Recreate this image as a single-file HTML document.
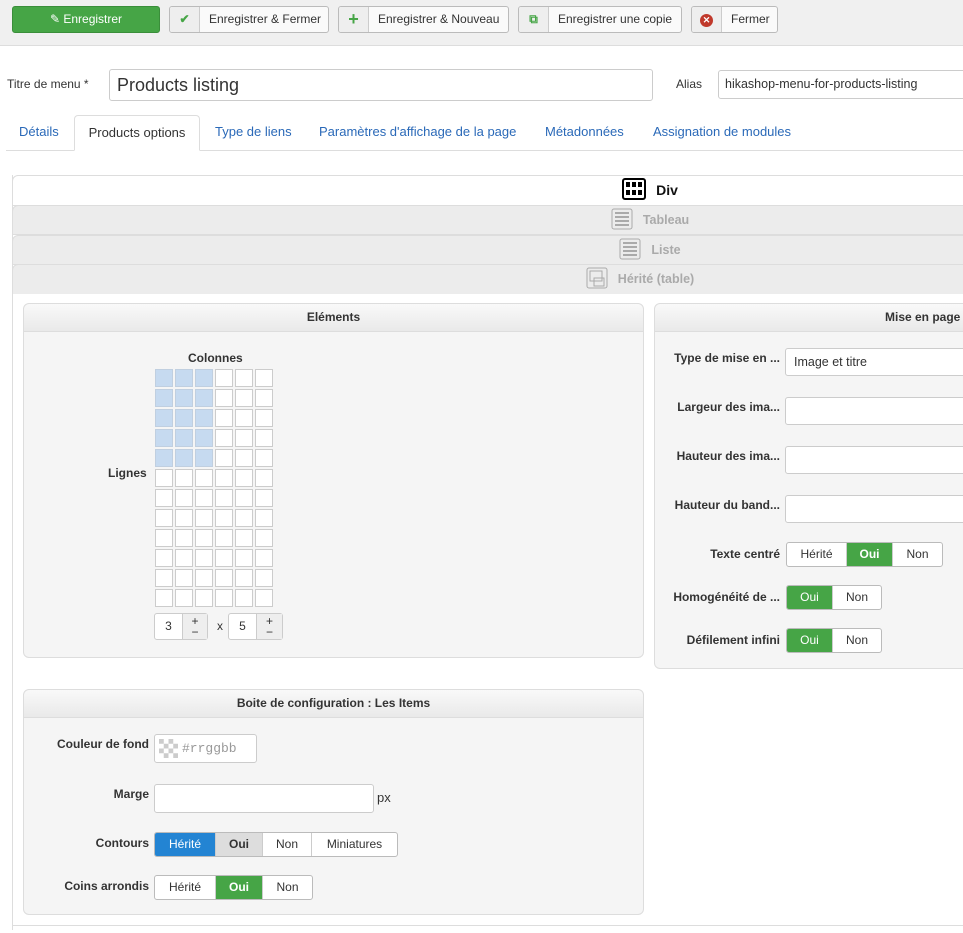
<!DOCTYPE html>
<html><head><meta charset="utf-8">
<style>
*{box-sizing:border-box}
body{margin:0;width:963px;height:933px;overflow:hidden;background:#fff;font-family:"Liberation Sans",Arial,sans-serif;font-size:13px;color:#333;position:relative}
.a{position:absolute;white-space:nowrap}
.tb{left:0;top:0;width:963px;height:46px;background:#f0f0f0;border-bottom:1px solid #ddd}
.btn{position:absolute;top:6px;height:27px;border:1px solid #bbb;border-radius:3px;background:#fafafa;font-size:12px;line-height:25px;color:#333;display:flex;white-space:nowrap;overflow:hidden}
.btn .ic{width:30px;flex:none;border-right:1px solid #ccc;background:#eee;text-align:center;font-weight:bold}
.btn .t{padding:0 9px}
.inp{position:absolute;border:1px solid #ccc;border-radius:3px;background:#fff;white-space:nowrap;overflow:hidden}
.tab{position:absolute;top:115px;height:36px;line-height:34px;color:#2a69b8;font-size:13px;white-space:nowrap}
.acc{position:absolute;left:12px;width:1276px;border:1px solid #ddd;border-radius:6px 0 0 0;text-align:center;font-weight:bold}
.panel{position:absolute;background:#f5f5f5;border:1px solid #ddd;border-radius:6px}
.ph{height:28px;line-height:27px;text-align:center;font-weight:bold;font-size:12px;background:linear-gradient(#f9f9f9,#e9e9e9);border-bottom:1px solid #ddd;border-radius:6px 6px 0 0;color:#333;white-space:nowrap}
.lbl{position:absolute;font-weight:bold;font-size:12px;text-align:right;color:#333;white-space:nowrap}
.grp{position:absolute;display:flex;height:25px;border:1px solid #bbb;border-radius:3px;overflow:hidden;background:#fff;font-size:12px;line-height:23px}
.grp span{text-align:center;border-right:1px solid #ccc}
.grp span:last-child{border-right:none}
.g{background:#46a546;color:#fff}
.cell{position:absolute;width:18px;height:18px;border:1px solid #ccc;background:#fff}
.cell.s{background:#c6daf0;border-color:#c0cfe0}
</style></head><body>
<div class="a tb"></div>
<div class="btn" style="left:12px;width:148px;background:#46a546;border-color:#3a8e3a;color:#fff;justify-content:center">&#9998;&nbsp;Enregistrer</div>
<div class="btn" style="left:169px;width:160px"><span class="ic" style="color:#46a546">&#10004;</span><span class="t">Enregistrer &amp; Fermer</span></div>
<div class="btn" style="left:338px;width:171px"><span class="ic" style="color:#46a546;font-size:18px">+</span><span class="t">Enregistrer &amp; Nouveau</span></div>
<div class="btn" style="left:518px;width:164px"><span class="ic" style="color:#46a546">&#10697;</span><span class="t">Enregistrer une copie</span></div>
<div class="btn" style="left:691px;width:87px"><span class="ic"><span style="display:inline-block;width:13px;height:13px;border-radius:50%;background:#c0392b;color:#fff;font-size:9px;line-height:13px;margin-top:6px">&#10005;</span></span><span class="t">Fermer</span></div>

<div class="a" style="left:7px;top:77px;font-size:12px">Titre de menu *</div>
<div class="inp" style="left:109px;top:69px;width:544px;height:32px;font-size:18px;line-height:30px;padding-left:7px">Products listing</div>
<div class="a" style="left:676px;top:77px;font-size:12px">Alias</div>
<div class="inp" style="left:718px;top:70px;width:250px;height:29px;line-height:27px;padding-left:6px;font-size:12.5px">hikashop-menu-for-products-listing</div>

<div class="a" style="left:6px;top:150px;width:957px;border-top:1px solid #ddd"></div>
<div class="tab" style="left:19px">Détails</div>
<div class="tab" style="left:74px;width:126px;border:1px solid #ddd;border-bottom-color:#fff;background:#fff;border-radius:4px 4px 0 0;color:#333;text-align:center">Products options</div>
<div class="tab" style="left:215px">Type de liens</div>
<div class="tab" style="left:319px">Paramètres d'affichage de la page</div>
<div class="tab" style="left:545px">Métadonnées</div>
<div class="tab" style="left:653px">Assignation de modules</div>

<div class="a" style="left:12px;top:175px;width:1px;height:755px;background:#ddd"></div>
<div class="a" style="left:12px;top:925px;width:951px;height:1px;background:#ddd"></div>
<div class="acc" style="top:175px;height:31px;background:#fff;font-size:14px;line-height:28px;color:#111"><svg width="24" height="22" style="vertical-align:-5px;margin-right:10px" viewBox="0 0 24 22"><rect x="1" y="1" width="22" height="20" rx="2" fill="#fff" stroke="#000" stroke-width="2"/><g fill="#000"><rect x="4" y="4" width="4" height="5"/><rect x="10" y="4" width="4" height="5"/><rect x="16" y="4" width="4" height="5"/><rect x="4" y="12" width="4" height="5"/><rect x="10" y="12" width="4" height="5"/><rect x="16" y="12" width="4" height="5"/></g></svg>Div</div>
<div class="acc" style="top:205px;height:30px;background:#ececec;color:#aaa;line-height:28px;font-size:12.5px"><svg width="22" height="22" style="vertical-align:-6px;margin-right:10px" viewBox="0 0 22 22"><rect x="1" y="1" width="20" height="20" rx="2" fill="none" stroke="#aaa"/><g stroke="#aaa" stroke-width="2"><path d="M4 5h14M4 9h14M4 13h14M4 17h14"/></g></svg>Tableau</div>
<div class="acc" style="top:235px;height:30px;background:#ececec;color:#aaa;line-height:28px;font-size:12.5px"><svg width="22" height="22" style="vertical-align:-6px;margin-right:10px" viewBox="0 0 22 22"><rect x="1" y="1" width="20" height="20" rx="2" fill="none" stroke="#aaa"/><g stroke="#aaa" stroke-width="2"><path d="M4 5h14M4 9h14M4 13h14M4 17h14"/></g></svg>Liste</div>
<div class="acc" style="top:264px;height:30px;background:#ececec;color:#aaa;line-height:28px;font-size:12.5px;border-bottom:none;padding-right:20px"><svg width="22" height="22" style="vertical-align:-6px;margin-right:10px" viewBox="0 0 22 22"><rect x="1" y="1" width="20" height="20" rx="2" fill="none" stroke="#aaa"/><rect x="4" y="4" width="12" height="10" fill="none" stroke="#aaa"/><rect x="8" y="11" width="10" height="8" fill="none" stroke="#aaa"/></svg>Hérité (table)</div>

<div class="panel" style="left:23px;top:303px;width:621px;height:355px"><div class="ph">Eléments</div></div>
<div class="lbl" style="left:188px;top:351px">Colonnes</div>
<div class="lbl" style="left:108px;top:466px">Lignes</div>
<div id="grid"></div>
<div class="a" style="left:154px;top:613px;width:54px;height:27px;border:1px solid #ccc;border-radius:3px;background:#fff;display:flex;font-size:12px"><span style="width:27px;text-align:center;line-height:25px">3</span><span style="flex:1;background:#eee;border-left:1px solid #ccc;text-align:center;line-height:11px;padding-top:2px">+<br>−</span></div>
<div class="a" style="left:217px;top:619px;font-size:12px">x</div>
<div class="a" style="left:228px;top:613px;width:55px;height:27px;border:1px solid #ccc;border-radius:3px;background:#fff;display:flex;font-size:12px"><span style="width:27px;text-align:center;line-height:25px">5</span><span style="flex:1;background:#eee;border-left:1px solid #ccc;text-align:center;line-height:11px;padding-top:2px">+<br>−</span></div>

<div class="panel" style="left:654px;top:303px;width:330px;height:366px"><div class="ph" style="text-align:left;padding-left:230px">Mise en page</div></div>
<div class="lbl" style="left:658px;top:351px;width:122px">Type de mise en ...</div>
<div class="inp" style="left:785px;top:348px;width:200px;height:28px;line-height:26px;padding-left:8px;font-size:12.5px">Image et titre</div>
<div class="lbl" style="left:658px;top:400px;width:122px">Largeur des ima...</div>
<div class="inp" style="left:785px;top:397px;width:200px;height:28px"></div>
<div class="lbl" style="left:658px;top:449px;width:122px">Hauteur des ima...</div>
<div class="inp" style="left:785px;top:446px;width:200px;height:28px"></div>
<div class="lbl" style="left:658px;top:498px;width:122px">Hauteur du band...</div>
<div class="inp" style="left:785px;top:495px;width:200px;height:28px"></div>
<div class="lbl" style="left:658px;top:547px;width:122px">Texte centré</div>
<div class="grp" style="left:786px;top:542px"><span style="width:60px">Hérité</span><span class="g" style="width:46px;font-weight:bold">Oui</span><span style="width:49px">Non</span></div>
<div class="lbl" style="left:658px;top:590px;width:122px">Homogénéité de ...</div>
<div class="grp" style="left:786px;top:585px"><span class="g" style="width:46px">Oui</span><span style="width:48px">Non</span></div>
<div class="lbl" style="left:658px;top:633px;width:122px">Défilement infini</div>
<div class="grp" style="left:786px;top:628px"><span class="g" style="width:46px">Oui</span><span style="width:48px">Non</span></div>

<div class="panel" style="left:23px;top:689px;width:621px;height:226px"><div class="ph">Boite de configuration : Les Items</div></div>
<div class="lbl" style="left:30px;top:737px;width:119px">Couleur de fond</div>
<div class="inp" style="left:154px;top:734px;width:103px;height:29px;display:flex;align-items:center;padding-left:4px"><svg width="19" height="19" viewBox="0 0 4 4"><rect width="4" height="4" fill="#fff"/><g fill="#ccc"><rect x="0" y="0" width="1" height="1"/><rect x="2" y="0" width="1" height="1"/><rect x="1" y="1" width="1" height="1"/><rect x="3" y="1" width="1" height="1"/><rect x="0" y="2" width="1" height="1"/><rect x="2" y="2" width="1" height="1"/><rect x="1" y="3" width="1" height="1"/><rect x="3" y="3" width="1" height="1"/></g></svg><span style="font-family:'Liberation Mono',monospace;color:#999;margin-left:4px;font-size:13px">#rrggbb</span></div>
<div class="lbl" style="left:30px;top:787px;width:119px">Marge</div>
<div class="inp" style="left:154px;top:784px;width:220px;height:29px"></div>
<div class="a" style="left:377px;top:790px">px</div>
<div class="lbl" style="left:30px;top:836px;width:119px">Contours</div>
<div class="grp" style="left:154px;top:832px"><span style="width:61px;background:#2384d3;color:#fff">Hérité</span><span style="width:47px;background:#ddd;font-weight:bold">Oui</span><span style="width:49px">Non</span><span style="width:85px">Miniatures</span></div>
<div class="lbl" style="left:30px;top:879px;width:119px">Coins arrondis</div>
<div class="grp" style="left:154px;top:875px"><span style="width:61px">Hérité</span><span class="g" style="width:47px;font-weight:bold">Oui</span><span style="width:49px">Non</span></div>

<script>
var h='';for(var r=0;r<12;r++)for(var c=0;c<6;c++){h+='<div class="cell'+(r<5&&c<3?' s':'')+'" style="left:'+(155+c*20)+'px;top:'+(369+r*20)+'px"></div>';}
document.getElementById('grid').innerHTML=h;
</script>
</body></html>
